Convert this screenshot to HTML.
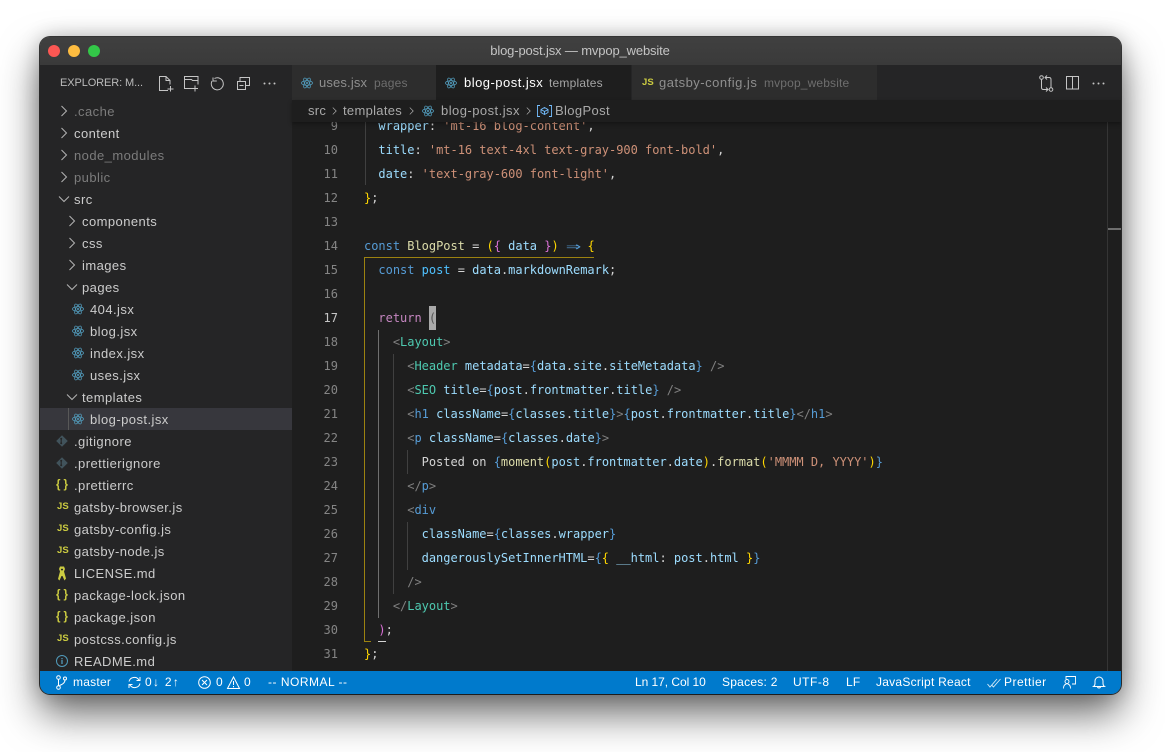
<!DOCTYPE html>
<html>
<head>
<meta charset="utf-8">
<style>
html,body{margin:0;padding:0;background:#fff;width:1165px;height:752px;overflow:hidden}
body{position:relative;font-family:"Liberation Sans",sans-serif}
#bg{position:absolute;left:0;top:0;width:1165px;height:752px;background:#fff}
#shadow{position:absolute;left:40px;top:37px;width:1081px;height:657px;border-radius:10px;box-shadow:0 20px 40px rgba(0,0,0,.58),0 0 20px rgba(0,0,0,.22),0 0 0 1px rgba(0,0,0,.75)}
#win{position:absolute;left:40px;top:37px;width:1081px;height:657px;border-radius:10px;overflow:hidden;background:#1e1e1e}
#in{position:absolute;left:-40px;top:-37px;width:1165px;height:752px}
.a{position:absolute}
.t{position:absolute;white-space:pre}
svg{position:absolute;overflow:visible}
.side{left:40px;top:65px;width:252px;height:606px;background:#252526}
.r{position:absolute;white-space:pre;font-size:13px;line-height:22px;height:22px;color:#ccc;letter-spacing:.44px;margin-top:1px}
.ig{color:#7c7c7c}
.l{position:absolute;left:364px;white-space:pre;font:12px/24px "DejaVu Sans Mono","Liberation Mono",monospace;color:#d4d4d4;height:24px;letter-spacing:-.02px;margin-top:1px}
.n{position:absolute;left:292px;width:46px;text-align:right;font:12px/24px "DejaVu Sans Mono","Liberation Mono",monospace;color:#858585;height:24px;margin-top:1px}
.k{color:#569cd6}.f{color:#dcdcaa}.v{color:#9cdcfe}.c{color:#4fc1ff}.s{color:#ce9178}.y{color:#ffd700}.m{color:#da70d6}.b{color:#179fff}
.rt{color:#c586c0}.g{color:#808080}.cp{color:#4ec9b0}
.ar{display:inline-block;width:7.2px;margin-right:7.2px;transform-origin:0 50%;transform:scale(2.1,1.25);color:#569cd6}
.st{position:absolute;top:671px;height:23px;line-height:23px;font-size:12px;color:#fff;white-space:pre;letter-spacing:.25px}
.js{position:absolute;font:bold 9.500px/12px "Liberation Sans",sans-serif;color:#cbcb41;letter-spacing:.1px}
.br{position:absolute;font:bold 11.500px/14px "Liberation Sans",sans-serif;color:#cbcb41;letter-spacing:3px}
.bc{position:absolute;top:100px;line-height:22px;font-size:13px;color:#a9a9a9;white-space:pre;letter-spacing:.3px}
</style>
</head>
<body>
<div id="bg"></div>
<div id="shadow"></div>
<div id="win"><div id="in">

<svg width="0" height="0" style="position:absolute">
<defs>
<symbol id="re" viewBox="0 0 16 16"><g fill="none" stroke="#519aba" stroke-width="1"><ellipse cx="8" cy="8" rx="7.4" ry="3"/><ellipse cx="8" cy="8" rx="7.4" ry="3" transform="rotate(60 8 8)"/><ellipse cx="8" cy="8" rx="7.4" ry="3" transform="rotate(120 8 8)"/></g><circle cx="8" cy="8" r="1.4" fill="#519aba"/></symbol>
<symbol id="ch" viewBox="0 0 16 16"><path d="M5.500 3L10.500 8l-5 5" fill="none" stroke="#b4b4b4" stroke-width="1"/></symbol>
<symbol id="cd" viewBox="0 0 16 16"><path d="M3 5.500L8 10.500l5-5" fill="none" stroke="#b4b4b4" stroke-width="1"/></symbol>
</defs>
</svg>

<!-- titlebar -->
<div class="a" style="left:40px;top:37px;width:1081px;height:28px;background:linear-gradient(#404040,#3a3a3a)"></div>
<div class="a" style="left:48px;top:45px;width:12px;height:12px;border-radius:50%;background:#fc5753"></div>
<div class="a" style="left:68px;top:45px;width:12px;height:12px;border-radius:50%;background:#fdbc40"></div>
<div class="a" style="left:88px;top:45px;width:12px;height:12px;border-radius:50%;background:#33c748"></div>
<div class="t" style="left:380px;width:400px;text-align:center;top:41px;line-height:20px;font-size:13px;color:#c4c4c4;letter-spacing:-.14px">blog-post.jsx — mvpop_website</div>

<!-- sidebar -->
<div class="a side"></div>
<div class="t" style="left:60px;top:75px;line-height:16px;font-size:11px;color:#bbb;letter-spacing:-.1px">EXPLORER: M...</div>
<svg style="left:159px;top:76px" width="15" height="16" viewBox="0 0 15 16" fill="none" stroke="#c5c5c5" stroke-width="1"><path d="M9 14.500H.5V.500h6.500l4 4v4M7 .500v4h4M11.500 10v5.500M8.500 13h6"/></svg>
<svg style="left:184px;top:76px" width="15" height="16" viewBox="0 0 15 16" fill="none" stroke="#c5c5c5" stroke-width="1"><path d="M8 12.500H.5V.500h13.500v8M.5 3.500h7l1 1h5.500M11 9.500v6M8 12.500h6"/></svg>
<svg style="left:211px;top:77px" width="13" height="14" viewBox="0 0 13 14" fill="none" stroke="#c5c5c5" stroke-width="1"><path d="M3.500 1.500a6 6 0 1 1-2.500 2.500M2 .5v3.500h3.800"/></svg>
<svg style="left:237px;top:77px" width="13" height="13" viewBox="0 0 13 13" fill="none" stroke="#c5c5c5" stroke-width="1"><path d="M.5 4.500h8v8h-8zM3 4.500V.5h9.500v8H8.500M2.500 8.500h4"/></svg>
<svg style="left:263px;top:82px" width="13" height="3" viewBox="0 0 13 3" fill="#c5c5c5"><circle cx="1.500" cy="1.500" r="1"/><circle cx="6.500" cy="1.500" r="1"/><circle cx="11.500" cy="1.500" r="1"/></svg>

<div class="r ig" style="left:74px;top:100px">.cache</div>
<div class="r" style="left:74px;top:122px">content</div>
<div class="r ig" style="left:74px;top:144px">node_modules</div>
<div class="r ig" style="left:74px;top:166px">public</div>
<div class="r" style="left:74px;top:188px">src</div>
<div class="r" style="left:82px;top:210px">components</div>
<div class="r" style="left:82px;top:232px">css</div>
<div class="r" style="left:82px;top:254px">images</div>
<div class="r" style="left:82px;top:276px">pages</div>
<div class="r" style="left:90px;top:298px">404.jsx</div>
<div class="r" style="left:90px;top:320px">blog.jsx</div>
<div class="r" style="left:90px;top:342px">index.jsx</div>
<div class="r" style="left:90px;top:364px">uses.jsx</div>
<div class="r" style="left:82px;top:386px">templates</div>
<div class="a" style="left:40px;top:408px;width:252px;height:22px;background:#37373d"></div>
<div class="a" style="left:68px;top:408px;width:1px;height:22px;background:#585858"></div>
<div class="r" style="left:90px;top:408px">blog-post.jsx</div>
<div class="r" style="left:74px;top:430px">.gitignore</div>
<div class="r" style="left:74px;top:452px">.prettierignore</div>
<div class="r" style="left:74px;top:474px">.prettierrc</div>
<div class="r" style="left:74px;top:496px">gatsby-browser.js</div>
<div class="r" style="left:74px;top:518px">gatsby-config.js</div>
<div class="r" style="left:74px;top:540px">gatsby-node.js</div>
<div class="r" style="left:74px;top:562px">LICENSE.md</div>
<div class="r" style="left:74px;top:584px">package-lock.json</div>
<div class="r" style="left:74px;top:606px">package.json</div>
<div class="r" style="left:74px;top:628px">postcss.config.js</div>
<div class="r" style="left:74px;top:650px">README.md</div>

<svg style="left:56px;top:103px" width="16" height="16"><use href="#ch"/></svg>
<svg style="left:56px;top:125px" width="16" height="16"><use href="#ch"/></svg>
<svg style="left:56px;top:147px" width="16" height="16"><use href="#ch"/></svg>
<svg style="left:56px;top:169px" width="16" height="16"><use href="#ch"/></svg>
<svg style="left:56px;top:191px" width="16" height="16"><use href="#cd"/></svg>
<svg style="left:64px;top:213px" width="16" height="16"><use href="#ch"/></svg>
<svg style="left:64px;top:235px" width="16" height="16"><use href="#ch"/></svg>
<svg style="left:64px;top:257px" width="16" height="16"><use href="#ch"/></svg>
<svg style="left:64px;top:279px" width="16" height="16"><use href="#cd"/></svg>
<svg style="left:64px;top:389px" width="16" height="16"><use href="#cd"/></svg>

<svg style="left:72px;top:303px" width="12" height="12"><use href="#re"/></svg>
<svg style="left:72px;top:325px" width="12" height="12"><use href="#re"/></svg>
<svg style="left:72px;top:347px" width="12" height="12"><use href="#re"/></svg>
<svg style="left:72px;top:369px" width="12" height="12"><use href="#re"/></svg>
<svg style="left:72px;top:413px" width="12" height="12"><use href="#re"/></svg>
<svg style="left:56px;top:435px" width="12" height="12" viewBox="0 0 12 12"><path d="M6 .2L11.800 6 6 11.800.2 6z" fill="#41535b"/><path d="M5.200 3.800v4.400" stroke="#252526" stroke-width="1.100"/><circle cx="5.200" cy="3.800" r="1" fill="#252526"/><circle cx="5.200" cy="8.200" r="1" fill="#252526"/></svg>
<svg style="left:56px;top:457px" width="12" height="12" viewBox="0 0 12 12"><path d="M6 .2L11.800 6 6 11.800.2 6z" fill="#41535b"/><path d="M5.200 3.800v4.400" stroke="#252526" stroke-width="1.100"/><circle cx="5.200" cy="3.800" r="1" fill="#252526"/><circle cx="5.200" cy="8.200" r="1" fill="#252526"/></svg>
<div class="br" style="left:56px;top:478px">{}</div>
<div class="js" style="left:57px;top:501px">JS</div>
<div class="js" style="left:57px;top:523px">JS</div>
<div class="js" style="left:57px;top:545px">JS</div>
<svg style="left:57px;top:566px" width="10" height="15" viewBox="0 0 10 15"><path d="M3 .5h4l1 2.500-1 2.500 2 7-1.500 2-2-4.500H4.500l-2 4.500L1 13 3 5.500 2 3z" fill="#cbcb41"/><path d="M4 2.800h2v1.500H4z" fill="#252526"/></svg>
<div class="br" style="left:56px;top:588px">{}</div>
<div class="br" style="left:56px;top:610px">{}</div>
<div class="js" style="left:57px;top:633px">JS</div>
<svg style="left:56px;top:655px" width="12" height="12" viewBox="0 0 12 12" fill="none"><circle cx="6" cy="6" r="5.500" stroke="#519aba"/><path d="M6 5v4M6 3v1.200" stroke="#519aba" stroke-width="1.300"/></svg>

<!-- tabs -->
<div class="a" style="left:292px;top:65px;width:829px;height:35px;background:#252526"></div>
<div class="a" style="left:292px;top:65px;width:144px;height:35px;background:#2d2d2d"></div>
<div class="a" style="left:436px;top:65px;width:195px;height:35px;background:#1e1e1e"></div>
<div class="a" style="left:632px;top:65px;width:245px;height:35px;background:#2d2d2d"></div>
<svg style="left:301px;top:77px" width="12" height="12"><use href="#re"/></svg>
<svg style="left:445px;top:77px" width="12" height="12"><use href="#re"/></svg>
<div class="js" style="left:642px;top:77px">JS</div>
<div class="t" style="left:319px;top:73px;line-height:20px;font-size:13px;color:#8f8f8f;letter-spacing:.15px">uses.jsx</div>
<div class="t" style="left:374px;top:73px;line-height:20px;font-size:12px;color:#6e6e6e;letter-spacing:.2px">pages</div>
<div class="t" style="left:464px;top:73px;line-height:20px;font-size:13px;color:#fff;letter-spacing:.48px">blog-post.jsx</div>
<div class="t" style="left:549px;top:73px;line-height:20px;font-size:12px;color:#a5a5a5;letter-spacing:.2px">templates</div>
<div class="t" style="left:659px;top:73px;line-height:20px;font-size:13px;color:#8f8f8f;letter-spacing:.5px">gatsby-config.js</div>
<div class="t" style="left:764px;top:73px;line-height:20px;font-size:12px;color:#6e6e6e;letter-spacing:.15px">mvpop_website</div>
<svg style="left:1039px;top:75px" width="15" height="17" viewBox="0 0 15 17" fill="none" stroke="#c5c5c5"><circle cx="2.500" cy="2.500" r="1.800"/><circle cx="12" cy="14.500" r="1.800"/><path d="M2.500 4.500V12.500q0 2 2 2h4M7 12.500l2 2-2 2M12 12.500V4.500q0-2-2-2H6M8 .5l-2 2 2 2"/></svg>
<svg style="left:1066px;top:76px" width="13" height="14" viewBox="0 0 13 14" fill="none" stroke="#c5c5c5"><path d="M.5.5h12v12.500H.5zM6.500.5v12.500"/></svg>
<svg style="left:1092px;top:82px" width="13" height="3" viewBox="0 0 13 3" fill="#c5c5c5"><circle cx="1.500" cy="1.500" r="1"/><circle cx="6.500" cy="1.500" r="1"/><circle cx="11.500" cy="1.500" r="1"/></svg>

<!-- editor -->
<div class="a" style="left:292px;top:100px;width:829px;height:571px;background:#1e1e1e"></div>

<div class="a" style="left:292px;top:122px;width:829px;height:549px;overflow:hidden">
<div id="code" class="a" style="left:-292px;top:-122px;width:1165px;height:752px">
<div class="a" style="left:365px;top:122px;width:1px;height:63px;background:#404040"></div>
<div class="a" style="left:378px;top:330px;width:1px;height:288px;background:#707070"></div>
<div class="a" style="left:393px;top:354px;width:1px;height:240px;background:#404040"></div>
<div class="a" style="left:407px;top:450px;width:1px;height:24px;background:#404040"></div>
<div class="a" style="left:407px;top:522px;width:1px;height:48px;background:#404040"></div>
<div class="a" style="left:364px;top:257px;width:230px;height:1px;background:#9c8210"></div>
<div class="a" style="left:364px;top:257px;width:1px;height:385px;background:#9c8210"></div>
<div class="a" style="left:364px;top:641px;width:7px;height:1px;background:#9c8210"></div>
<div class="a" style="left:378px;top:641px;width:8px;height:1px;background:#d4d4d4"></div>
<div class="a" style="left:429px;top:306px;width:7px;height:24px;background:#a9a9a9"></div>

<div class="n" style="top:113px">9</div><div class="l" style="top:113px">  <span class="v">wrapper</span>: <span class="s">'mt-16 blog-content'</span>,</div>
<div class="n" style="top:137px">10</div><div class="l" style="top:137px">  <span class="v">title</span>: <span class="s">'mt-16 text-4xl text-gray-900 font-bold'</span>,</div>
<div class="n" style="top:161px">11</div><div class="l" style="top:161px">  <span class="v">date</span>: <span class="s">'text-gray-600 font-light'</span>,</div>
<div class="n" style="top:185px">12</div><div class="l" style="top:185px"><span class="y">}</span>;</div>
<div class="n" style="top:209px">13</div>
<div class="n" style="top:233px">14</div><div class="l" style="top:233px"><span class="k">const</span> <span class="f">BlogPost</span> = <span class="y">(</span><span class="m">{</span> <span class="v">data</span> <span class="m">}</span><span class="y">)</span> <span class="ar">⇒</span> <span class="y">{</span></div>
<div class="n" style="top:257px">15</div><div class="l" style="top:257px">  <span class="k">const</span> <span class="c">post</span> = <span class="v">data</span>.<span class="v">markdownRemark</span>;</div>
<div class="n" style="top:281px">16</div>
<div class="n" style="top:305px;color:#c6c6c6">17</div><div class="l" style="top:305px">  <span class="rt">return</span> <span style="color:#555">(</span></div>
<div class="n" style="top:329px">18</div><div class="l" style="top:329px">    <span class="g">&lt;</span><span class="cp">Layout</span><span class="g">&gt;</span></div>
<div class="n" style="top:353px">19</div><div class="l" style="top:353px">      <span class="g">&lt;</span><span class="cp">Header</span> <span class="v">metadata</span>=<span class="k">{</span><span class="v">data</span>.<span class="v">site</span>.<span class="v">siteMetadata</span><span class="k">}</span> <span class="g">/&gt;</span></div>
<div class="n" style="top:377px">20</div><div class="l" style="top:377px">      <span class="g">&lt;</span><span class="cp">SEO</span> <span class="v">title</span>=<span class="k">{</span><span class="v">post</span>.<span class="v">frontmatter</span>.<span class="v">title</span><span class="k">}</span> <span class="g">/&gt;</span></div>
<div class="n" style="top:401px">21</div><div class="l" style="top:401px">      <span class="g">&lt;</span><span class="k">h1</span> <span class="v">className</span>=<span class="k">{</span><span class="v">classes</span>.<span class="v">title</span><span class="k">}</span><span class="g">&gt;</span><span class="k">{</span><span class="v">post</span>.<span class="v">frontmatter</span>.<span class="v">title</span><span class="k">}</span><span class="g">&lt;/</span><span class="k">h1</span><span class="g">&gt;</span></div>
<div class="n" style="top:425px">22</div><div class="l" style="top:425px">      <span class="g">&lt;</span><span class="k">p</span> <span class="v">className</span>=<span class="k">{</span><span class="v">classes</span>.<span class="v">date</span><span class="k">}</span><span class="g">&gt;</span></div>
<div class="n" style="top:449px">23</div><div class="l" style="top:449px">        Posted on <span class="k">{</span><span class="f">moment</span><span class="y">(</span><span class="v">post</span>.<span class="v">frontmatter</span>.<span class="v">date</span><span class="y">)</span>.<span class="f">format</span><span class="y">(</span><span class="s">'MMMM D, YYYY'</span><span class="y">)</span><span class="k">}</span></div>
<div class="n" style="top:473px">24</div><div class="l" style="top:473px">      <span class="g">&lt;/</span><span class="k">p</span><span class="g">&gt;</span></div>
<div class="n" style="top:497px">25</div><div class="l" style="top:497px">      <span class="g">&lt;</span><span class="k">div</span></div>
<div class="n" style="top:521px">26</div><div class="l" style="top:521px">        <span class="v">className</span>=<span class="k">{</span><span class="v">classes</span>.<span class="v">wrapper</span><span class="k">}</span></div>
<div class="n" style="top:545px">27</div><div class="l" style="top:545px">        <span class="v">dangerouslySetInnerHTML</span>=<span class="k">{</span><span class="y">{</span> <span class="v">__html</span>: <span class="v">post</span>.<span class="v">html</span> <span class="y">}</span><span class="k">}</span></div>
<div class="n" style="top:569px">28</div><div class="l" style="top:569px">      <span class="g">/&gt;</span></div>
<div class="n" style="top:593px">29</div><div class="l" style="top:593px">    <span class="g">&lt;/</span><span class="cp">Layout</span><span class="g">&gt;</span></div>
<div class="n" style="top:617px">30</div><div class="l" style="top:617px">  <span class="m">)</span>;</div>
<div class="n" style="top:641px">31</div><div class="l" style="top:641px"><span class="y">}</span>;</div>

<div class="a" style="left:1107px;top:122px;width:1px;height:549px;background:#353535"></div>
<div class="a" style="left:1108px;top:228px;width:13px;height:2px;background:#6e6e6e"></div>
</div>
</div>

<!-- breadcrumb -->
<div class="a" style="left:292px;top:100px;width:829px;height:22px;background:#1e1e1e;box-shadow:0 2px 4px rgba(0,0,0,.35)"></div>
<div class="bc" style="left:308px">src</div>
<svg style="left:329px;top:105px" width="11" height="12" viewBox="0 0 16 16"><use href="#ch"/></svg>
<div class="bc" style="left:343px">templates</div>
<svg style="left:406px;top:105px" width="11" height="12" viewBox="0 0 16 16"><use href="#ch"/></svg>
<svg style="left:422px;top:105px" width="12" height="12"><use href="#re"/></svg>
<div class="bc" style="left:441px;letter-spacing:.46px">blog-post.jsx</div>
<svg style="left:523px;top:105px" width="11" height="12" viewBox="0 0 16 16"><use href="#ch"/></svg>
<svg style="left:537px;top:105px" width="15" height="12" viewBox="0 0 15 12" fill="none" stroke="#75beff" stroke-width=".9"><path d="M3 .5H.5v11H3M12 .5h2.500v11H12M7.500 2.500l3.500 2v3l-3.500 2-3.500-2v-3zM4 4.500l3.500 2 3.500-2M7.500 6.500v3"/></svg>
<div class="bc" style="left:555px;letter-spacing:.36px">BlogPost</div>

<!-- status bar -->
<div class="a" style="left:40px;top:671px;width:1081px;height:23px;background:#007acc"></div>
<svg style="left:56px;top:675px" width="11" height="15" viewBox="0 0 11 15" fill="none" stroke="#fff"><circle cx="2.500" cy="2.500" r="1.800"/><circle cx="2.500" cy="12.500" r="1.800"/><circle cx="9" cy="3.500" r="1.500"/><path d="M2.500 4.500v6M9 5q0 3.500-5.500 5.500"/></svg>
<div class="st" style="left:73px">master</div>
<svg style="left:128px;top:676px" width="13" height="13" viewBox="0 0 13 13" fill="none" stroke="#fff"><path d="M1 5.500a5.500 5.500 0 0 1 10-1.500M12 7.500a5.500 5.500 0 0 1-10 1.500M8.500 4.500H12V1M4.500 8.500H1V12"/></svg>
<div class="st" style="left:145px;letter-spacing:1.300px">0↓ 2↑</div>
<svg style="left:198px;top:676px" width="13" height="13" viewBox="0 0 13 13" fill="none" stroke="#fff"><circle cx="6.500" cy="6.500" r="5.800"/><path d="M4 4l5 5M9 4l-5 5"/></svg>
<div class="st" style="left:216px">0</div>
<svg style="left:227px;top:676px" width="13" height="13" viewBox="0 0 13 13" fill="none" stroke="#fff"><path d="M6.500 1L12.500 12.500H.5zM6.500 5v4M6.500 10v1.200"/></svg>
<div class="st" style="left:244px">0</div>
<div class="st" style="left:268px;letter-spacing:.5px">-- NORMAL --</div>
<div class="st" style="left:635px;letter-spacing:-.05px">Ln 17, Col 10</div>
<div class="st" style="left:722px">Spaces: 2</div>
<div class="st" style="left:793px;letter-spacing:.5px">UTF-8</div>
<div class="st" style="left:846px">LF</div>
<div class="st" style="left:876px">JavaScript React</div>
<svg style="left:987px;top:678px" width="14" height="10" viewBox="0 0 14 10" fill="none" stroke="#d7ecf8" stroke-width=".9"><path d="M.5 6l2.500 3L10 1M5 7.500l1.500 1.500L13.500 1"/></svg>
<div class="st" style="left:1004px;letter-spacing:.5px">Prettier</div>
<svg style="left:1063px;top:676px" width="13" height="13" viewBox="0 0 13 13" fill="none" stroke="#fff" stroke-width=".9"><path d="M3 3V.5h9.500V8H9M.5 12.500q0-4 3-4.500M7.500 12.500q0-4-3-4.500"/><circle cx="4" cy="5.500" r="2"/></svg>
<svg style="left:1093px;top:676px" width="12" height="13" viewBox="0 0 12 13" fill="none" stroke="#fff"><path d="M.5 10.500q1.500-1 1.500-3V5a4 4 0 0 1 8 0v2.500q0 2 1.500 3zM4.500 10.500a1.500 1.500 0 0 0 3 0"/></svg>

</div></div>
</body>
</html>
